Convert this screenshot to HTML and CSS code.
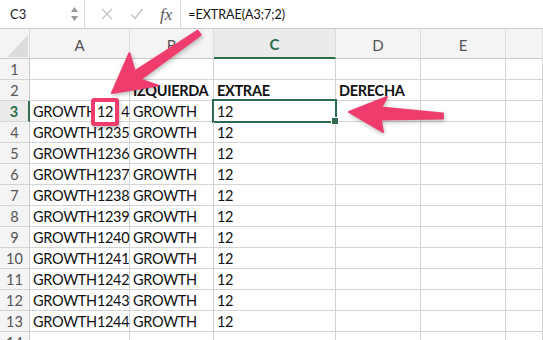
FILE: index.html
```html
<!DOCTYPE html>
<html lang="es">
  <head>
    <meta charset="UTF-8" />
    <meta name="viewport" content="width=device-width, initial-scale=1.0" />
    <title>EXTRAE</title>
    <link rel="stylesheet" href="styles.css">
  </head>
  <body>
    <div class="sheet">
      <!-- Barra de fórmulas -->
      <div class="formula-bar">
        <div class="name-box">C3</div>
        <div class="spinner">
          <svg width="9" height="18" viewBox="0 0 9 18">
            <path d="M4.5 2 L8 7 L1 7 Z" fill="#9a9a9a" />
            <path d="M4.5 16 L8 11 L1 11 Z" fill="#9a9a9a" />
          </svg>
        </div>
        <div class="bar-icons">
          <svg class="icon" width="14" height="14" viewBox="0 0 14 14">
            <path d="M2 2 L12 12 M12 2 L2 12" stroke="#c4c4c4" stroke-width="1.4" fill="none" />
          </svg>
          <svg class="icon" width="14" height="14" viewBox="0 0 14 14">
            <path d="M1.5 7.5 L5 11.5 L12.5 2" stroke="#c4c4c4" stroke-width="1.4" fill="none" />
          </svg>
          <span class="fx">fx</span>
        </div>
        <div class="formula">=EXTRAE(A3;7;2)</div>
      </div>

      <!-- Hoja -->
      <div class="grid">
        <div class="hd corner"></div>
        <div class="hd">A</div>
        <div class="hd">B</div>
        <div class="hd active">C</div>
        <div class="hd">D</div>
        <div class="hd">E</div>
        <div class="hd"></div>

        <div class="rh">1</div>
        <div class="cell"></div><div class="cell"></div><div class="cell"></div><div class="cell"></div><div class="cell"></div><div class="cell"></div>

        <div class="rh">2</div>
        <div class="cell"></div>
        <div class="cell bold">IZQUIERDA</div>
        <div class="cell bold">EXTRAE</div>
        <div class="cell bold">DERECHA</div>
        <div class="cell"></div><div class="cell"></div>

        <div class="rh active">3</div>
        <div class="cell">GROWTH<span class="hl">12</span><span class="tail">4</span></div>
        <div class="cell">GROWTH</div>
        <div class="cell selected">12</div>
        <div class="cell"></div><div class="cell"></div><div class="cell"></div>

        <div class="rh">4</div>
        <div class="cell">GROWTH1235</div><div class="cell">GROWTH</div><div class="cell">12</div>
        <div class="cell"></div><div class="cell"></div><div class="cell"></div>

        <div class="rh">5</div>
        <div class="cell">GROWTH1236</div><div class="cell">GROWTH</div><div class="cell">12</div>
        <div class="cell"></div><div class="cell"></div><div class="cell"></div>

        <div class="rh">6</div>
        <div class="cell">GROWTH1237</div><div class="cell">GROWTH</div><div class="cell">12</div>
        <div class="cell"></div><div class="cell"></div><div class="cell"></div>

        <div class="rh">7</div>
        <div class="cell">GROWTH1238</div><div class="cell">GROWTH</div><div class="cell">12</div>
        <div class="cell"></div><div class="cell"></div><div class="cell"></div>

        <div class="rh">8</div>
        <div class="cell">GROWTH1239</div><div class="cell">GROWTH</div><div class="cell">12</div>
        <div class="cell"></div><div class="cell"></div><div class="cell"></div>

        <div class="rh">9</div>
        <div class="cell">GROWTH1240</div><div class="cell">GROWTH</div><div class="cell">12</div>
        <div class="cell"></div><div class="cell"></div><div class="cell"></div>

        <div class="rh">10</div>
        <div class="cell">GROWTH1241</div><div class="cell">GROWTH</div><div class="cell">12</div>
        <div class="cell"></div><div class="cell"></div><div class="cell"></div>

        <div class="rh">11</div>
        <div class="cell">GROWTH1242</div><div class="cell">GROWTH</div><div class="cell">12</div>
        <div class="cell"></div><div class="cell"></div><div class="cell"></div>

        <div class="rh">12</div>
        <div class="cell">GROWTH1243</div><div class="cell">GROWTH</div><div class="cell">12</div>
        <div class="cell"></div><div class="cell"></div><div class="cell"></div>

        <div class="rh">13</div>
        <div class="cell">GROWTH1244</div><div class="cell">GROWTH</div><div class="cell">12</div>
        <div class="cell"></div><div class="cell"></div><div class="cell"></div>

        <div class="rh">14</div>
        <div class="cell"></div><div class="cell"></div><div class="cell"></div>
        <div class="cell"></div><div class="cell"></div><div class="cell"></div>
      </div>

      <!-- Flechas -->
      <svg class="marks" width="543" height="340" viewBox="0 0 543 340">
        <polygon points="112,93 129.4,53.1 134.7,71.3 197.8,30.7 200.6,34.9 140.3,79.5 158,85.6" fill="#ee3d6d" stroke="#ee3d6d" stroke-width="2" stroke-linejoin="round" />
        <polygon points="349,112 387,97 381.2,107.4 443,113.5 442.9,118.5 380.7,119.4 383,132" fill="#ee3d6d" stroke="#ee3d6d" stroke-width="2" stroke-linejoin="round" />
      </svg>
    </div>
  </body>
</html>
```

FILE: styles.css
```css
* {
  box-sizing: border-box;
  margin: 0;
  padding: 0;
}

body {
  font-family: Lato, "Liberation Sans", sans-serif;
  background-color: #fff;
  color: #111;
  overflow: hidden;
}

.sheet {
  position: relative;
  width: 543px;
  height: 340px;
  overflow: hidden;
}

.formula-bar {
  display: flex;
  align-items: center;
  height: 29px;
  border-bottom: 1px solid #c9c9c9;
  background-color: #fff;
}

.name-box {
  width: 70px;
  padding-left: 10px;
  font-size: 13px;
  color: #222;
}

.spinner {
  display: flex;
  align-items: center;
  width: 15px;
  height: 100%;
  border-right: 1px solid #d9d9d9;
}

.bar-icons {
  display: flex;
  align-items: center;
  gap: 16px;
  height: 100%;
  padding: 0 8px 0 15px;
  border-right: 1px solid #d9d9d9;
}

.fx {
  font-family: "Liberation Serif", "Times New Roman", serif;
  font-style: italic;
  font-size: 17px;
  color: #555;
  padding-top: 1px;
}

.formula {
  padding-left: 7px;
  font-size: 12.5px;
  color: #111;
}

.grid {
  display: grid;
  grid-template-columns: 30px 100px 84px 122px 85px 85px 1fr;
  grid-template-rows: 30px;
  grid-auto-rows: 21px;
}

.hd {
  display: flex;
  align-items: center;
  justify-content: center;
  background-color: #f4f4f4;
  border-right: 1px solid #dddddd;
  border-bottom: 1px solid #c9c9c9;
  font-size: 15px;
  color: #555;
  padding-top: 2px;
}

.hd.active {
  color: #2c6d4c;
  font-weight: bold;
  background-color: #ebebeb;
  border-bottom: 2px solid #2c6d4c;
}

.corner {
  position: relative;
}

.corner::after {
  content: "";
  position: absolute;
  right: 1px;
  bottom: 1px;
  border-left: 21px solid transparent;
  border-bottom: 22px solid #dcdcdc;
}

.rh {
  display: flex;
  align-items: center;
  justify-content: center;
  background-color: #f4f4f4;
  border-right: 1px solid #c9c9c9;
  border-bottom: 1px solid #d4d4d4;
  font-size: 14.5px;
  color: #555;
}

.rh.active {
  color: #2c6d4c;
  font-weight: bold;
  background-color: #ebebeb;
  border-right: 2px solid #2c6d4c;
}

.cell {
  position: relative;
  padding: 0 3px;
  line-height: 21px;
  font-size: 14.5px;
  letter-spacing: -0.3px;
  white-space: nowrap;
  border-right: 1px solid #d4d4d4;
  border-bottom: 1px solid #d4d4d4;
}

.cell.bold {
  font-weight: bold;
}

.hl {
  display: inline-block;
  line-height: 20px;
  margin: -4px 0 -4px -6px;
  padding: 0 2px;
  background-color: #fff;
  border: 4px solid #ee3d6d;
  border-radius: 3px;
  box-shadow: 1px 2px 3px rgba(0, 0, 0, 0.25);
}

.tail {
  margin-left: 2px;
}

.cell.selected::after {
  content: "";
  position: absolute;
  left: -2px;
  top: -2px;
  right: -2px;
  bottom: -2px;
  border: 2px solid #2f6b4f;
}

.cell.selected::before {
  content: "";
  position: absolute;
  right: -4px;
  bottom: -4px;
  width: 6px;
  height: 6px;
  background-color: #2f6b4f;
  border: 1px solid #fff;
  z-index: 1;
}

.marks {
  position: absolute;
  top: 0;
  left: 0;
  pointer-events: none;
  filter: drop-shadow(1px 2px 2px rgba(0, 0, 0, 0.25));
}
```
